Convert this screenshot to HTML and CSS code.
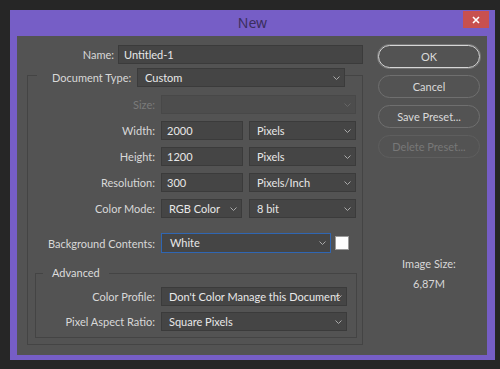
FILE: index.html
```html
<!DOCTYPE html>
<html lang="en">
<head>
    <meta charset="UTF-8">
    <meta name="viewport" content="width=device-width, initial-scale=1.0">
    <title>New</title>
    <link rel="stylesheet" href="styles.css">
</head>
<body>
    <div class="window">
        <div class="titlebar">
            <span class="title">New</span>
            <span class="close">
                <svg width="8" height="8" viewBox="0 0 8 8"><path d="M1 1L7 7M7 1L1 7" stroke="#fff" stroke-width="1.6"/></svg>
            </span>
        </div>

        <div class="panel">
            <div class="form">
                <div class="name-row">
                    <label class="name-label">Name:</label>
                    <div class="field name-field">Untitled-1</div>
                </div>

                <div class="group">
                    <div class="group-head">
                        <label>Document Type:</label>
                        <div class="field select doctype">Custom
                            <svg class="chev" width="7" height="4" viewBox="0 0 7 4"><path d="M0.5 0.5L3.5 3.5L6.5 0.5" fill="none" stroke="#a9a9a9"/></svg>
                        </div>
                    </div>

                    <div class="rows">
                        <div class="row">
                            <label class="lbl off">Size:</label>
                            <div class="field select size off-field">
                                <svg class="chev" width="7" height="4" viewBox="0 0 7 4"><path d="M0.5 0.5L3.5 3.5L6.5 0.5" fill="none" stroke="#666"/></svg>
                            </div>
                        </div>
                        <div class="row">
                            <label class="lbl">Width:</label>
                            <div class="field num">2000</div>
                            <div class="field select unit">Pixels
                                <svg class="chev" width="7" height="4" viewBox="0 0 7 4"><path d="M0.5 0.5L3.5 3.5L6.5 0.5" fill="none" stroke="#a9a9a9"/></svg>
                            </div>
                        </div>
                        <div class="row">
                            <label class="lbl">Height:</label>
                            <div class="field num">1200</div>
                            <div class="field select unit">Pixels
                                <svg class="chev" width="7" height="4" viewBox="0 0 7 4"><path d="M0.5 0.5L3.5 3.5L6.5 0.5" fill="none" stroke="#a9a9a9"/></svg>
                            </div>
                        </div>
                        <div class="row">
                            <label class="lbl">Resolution:</label>
                            <div class="field num">300</div>
                            <div class="field select unit">Pixels/Inch
                                <svg class="chev" width="7" height="4" viewBox="0 0 7 4"><path d="M0.5 0.5L3.5 3.5L6.5 0.5" fill="none" stroke="#a9a9a9"/></svg>
                            </div>
                        </div>
                        <div class="row">
                            <label class="lbl">Color Mode:</label>
                            <div class="field select mode">RGB Color
                                <svg class="chev" width="7" height="4" viewBox="0 0 7 4"><path d="M0.5 0.5L3.5 3.5L6.5 0.5" fill="none" stroke="#a9a9a9"/></svg>
                            </div>
                            <div class="field select unit bits">8 bit
                                <svg class="chev" width="7" height="4" viewBox="0 0 7 4"><path d="M0.5 0.5L3.5 3.5L6.5 0.5" fill="none" stroke="#a9a9a9"/></svg>
                            </div>
                        </div>
                    </div>

                    <div class="row bg-row">
                        <label class="lbl">Background Contents:</label>
                        <div class="field select bg-select">White
                            <svg class="chev" width="7" height="4" viewBox="0 0 7 4"><path d="M0.5 0.5L3.5 3.5L6.5 0.5" fill="none" stroke="#a9a9a9"/></svg>
                        </div>
                        <span class="swatch"></span>
                    </div>

                    <div class="advanced">
                        <div class="adv-title">Advanced</div>
                        <div class="adv-rows">
                            <div class="row">
                                <label class="lbl adv-lbl">Color Profile:</label>
                                <div class="field select adv-select">Don't Color Manage this Document
                                    <svg class="chev" width="7" height="4" viewBox="0 0 7 4"><path d="M0.5 0.5L3.5 3.5L6.5 0.5" fill="none" stroke="#a9a9a9"/></svg>
                                </div>
                            </div>
                            <div class="row">
                                <label class="lbl adv-lbl">Pixel Aspect Ratio:</label>
                                <div class="field select adv-select">Square Pixels
                                    <svg class="chev" width="7" height="4" viewBox="0 0 7 4"><path d="M0.5 0.5L3.5 3.5L6.5 0.5" fill="none" stroke="#a9a9a9"/></svg>
                                </div>
                            </div>
                        </div>
                    </div>
                </div>
            </div>

            <div class="side">
                <button class="btn primary">OK</button>
                <button class="btn">Cancel</button>
                <button class="btn">Save Preset...</button>
                <button class="btn" disabled>Delete Preset...</button>
                <div class="image-size">
                    <div>Image Size:</div>
                    <div>6,87M</div>
                </div>
            </div>
        </div>
    </div>
</body>
</html>
```

FILE: styles.css
```css
body {
    margin: 0;
    padding: 10px 0 0 10px;
    background-color: #262626;
    font-family: Lato, "Noto Sans", sans-serif;
    font-size: 11px;
    color: #d8d8d8;
}
.window {
    width: 485px;
    height: 350px;
    background-color: #765ec6;
    display: flex;
    flex-direction: column;
}
.titlebar {
    height: 26px;
    position: relative;
    text-align: center;
    line-height: 26px;
}
.title {
    font-family: "Noto Sans", sans-serif;
    font-size: 14px;
    color: #3b2e5e;
}
.close {
    position: absolute;
    top: 1px;
    right: 6px;
    width: 26px;
    height: 17px;
    background-color: #c8504f;
    display: flex;
    align-items: center;
    justify-content: center;
}
.panel {
    flex: 1;
    margin: 0 8px 5px 7px;
    background-color: #535353;
    display: flex;
}
.form {
    width: 346px;
    padding-top: 9px;
}
.name-row {
    display: flex;
    align-items: center;
    gap: 4px;
}
.name-label {
    width: 97px;
    text-align: right;
}
.field {
    box-sizing: border-box;
    height: 19px;
    line-height: 17px;
    background-color: #454545;
    border: 1px solid #3b3b3b;
    color: #e8e8e8;
    padding: 0 5px;
    white-space: nowrap;
    overflow: hidden;
}
.name-field {
    width: 245px;
}
.select {
    position: relative;
    padding: 0 14px 0 7px;
}
.chev {
    position: absolute;
    right: 4px;
    top: 7px;
}
.group {
    margin: 11px 0 0 10px;
    width: 336px;
    box-sizing: border-box;
    border: 1px solid #444;
}
.group-head {
    margin: -8px 0 0 9px;
    width: 308px;
    box-sizing: border-box;
    padding-left: 15px;
    background-color: #535353;
    display: flex;
    align-items: center;
}
.doctype {
    width: 208px;
    margin-left: auto;
}
.rows {
    margin-top: 8px;
    display: flex;
    flex-direction: column;
    gap: 7px;
}
.row {
    display: flex;
    align-items: center;
    gap: 6px;
}
.lbl {
    width: 127px;
    text-align: right;
    white-space: nowrap;
}
.off {
    color: #7b7b7b;
}
.off-field {
    background-color: #4d4d4d;
    border-color: #484848;
}
.size {
    width: 195px;
}
.num {
    width: 82px;
}
.unit {
    width: 107px;
}
.mode {
    width: 81px;
}
.bits {
    margin-left: 1px;
}
.bg-row {
    margin-top: 15px;
}
.bg-select {
    width: 170px;
    height: 20px;
    line-height: 18px;
    border-color: #2f66b3;
    padding-left: 8px;
}
.swatch {
    width: 12px;
    height: 12px;
    margin-left: -2px;
    background-color: #fff;
    border: 1px solid #9a9a9a;
}
.advanced {
    margin: 20px 5px 6px 7px;
    border: 1px solid #444;
    padding-bottom: 6px;
}
.adv-title {
    margin: -8px 0 0 7px;
    padding: 0 9px;
    width: max-content;
    line-height: 14px;
    background-color: #535353;
    color: #dcdcdc;
}
.adv-rows {
    margin-top: 7px;
    display: flex;
    flex-direction: column;
    gap: 6px;
}
.adv-lbl {
    width: 119px;
}
.adv-select {
    width: 186px;
}
.side {
    margin-left: 15px;
    width: 102px;
    padding-top: 9px;
    display: flex;
    flex-direction: column;
    gap: 7px;
}
.btn {
    height: 23px;
    border-radius: 12px;
    border: 1px solid #6f6f6f;
    background-color: transparent;
    color: #dadada;
    font-family: inherit;
    font-size: 11px;
    padding: 0;
}
.btn.primary {
    border-color: #d6d6d6;
    box-shadow: 0 0 0 1px rgba(200, 200, 200, 0.3);
}
.btn:disabled {
    color: #787878;
    border-color: #5e5e5e;
}
.image-size {
    margin-top: 89px;
    text-align: center;
    line-height: 20px;
}
```
